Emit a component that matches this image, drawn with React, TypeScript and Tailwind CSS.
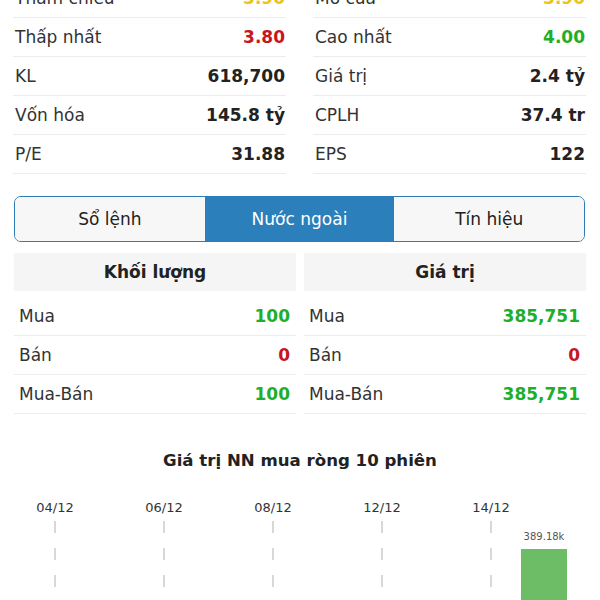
import React from "react";

type Row = { label: string; value: string; color?: string };

const leftTop: Row[] = [
  { label: "Tham chiếu", value: "3.90", color: "text-[#edc21a]" },
  { label: "Thấp nhất", value: "3.80", color: "text-[#c8161d]" },
  { label: "KL", value: "618,700" },
  { label: "Vốn hóa", value: "145.8 tỷ" },
  { label: "P/E", value: "31.88" },
];
const rightTop: Row[] = [
  { label: "Mở cửa", value: "3.90", color: "text-[#edc21a]" },
  { label: "Cao nhất", value: "4.00", color: "text-[#1fae2a]" },
  { label: "Giá trị", value: "2.4 tỷ" },
  { label: "CPLH", value: "37.4 tr" },
  { label: "EPS", value: "122" },
];

const leftNN: Row[] = [
  { label: "Mua", value: "100", color: "text-[#1fae2a]" },
  { label: "Bán", value: "0", color: "text-[#c8161d]" },
  { label: "Mua-Bán", value: "100", color: "text-[#1fae2a]" },
];
const rightNN: Row[] = [
  { label: "Mua", value: "385,751", color: "text-[#1fae2a]" },
  { label: "Bán", value: "0", color: "text-[#c8161d]" },
  { label: "Mua-Bán", value: "385,751", color: "text-[#1fae2a]" },
];

function TopCol({ rows }: { rows: Row[] }) {
  return (
    <div className="flex flex-col">
      {rows.map((r) => (
        <div
          key={r.label}
          className="h-[39px] border-b border-[#ececec] flex items-center justify-between pl-[2px] pr-[1px]"
        >
          <span className="text-[#333]">{r.label}</span>
          <span className={`font-bold ${r.color ?? "text-[#222]"}`}>{r.value}</span>
        </div>
      ))}
    </div>
  );
}

function NNCol({ title, rows }: { title: string; rows: Row[] }) {
  return (
    <div className="flex flex-col">
      <div className="h-[38px] bg-[#f5f5f5] flex items-center justify-center font-bold text-[#222]">
        {title}
      </div>
      <div className="mt-[6px] flex flex-col">
        {rows.map((r) => (
          <div
            key={r.label}
            className="h-[39px] border-b border-[#ededed] flex items-center justify-between pl-[5px] pr-[6px]"
          >
            <span className="text-[#333]">{r.label}</span>
            <span className={`font-bold ${r.color ?? "text-[#222]"}`}>{r.value}</span>
          </div>
        ))}
      </div>
    </div>
  );
}

const dates = ["04/12", "06/12", "08/12", "12/12", "14/12"];

export default function App() {
  return (
    <div
      className="w-[600px] h-[600px] overflow-hidden bg-white text-[17px] leading-[24px]"
      style={{ fontFamily: '"DejaVu Sans", sans-serif' }}
    >
      <div className="mt-[-21px] pl-[13px] pr-[14px] grid grid-cols-2 gap-x-[27px]">
        <TopCol rows={leftTop} />
        <TopCol rows={rightTop} />
      </div>

      <div className="mt-[22px] ml-[14px] mr-[15px] h-[46px] border border-[#2c7cb7] rounded-[7px] overflow-hidden grid grid-cols-3">
        <div className="bg-[#f7f7f7] flex items-center justify-center text-[#222]">Sổ lệnh</div>
        <div className="bg-[#2b7fba] flex items-center justify-center text-white">Nước ngoài</div>
        <div className="bg-[#f7f7f7] flex items-center justify-center text-[#222]">Tín hiệu</div>
      </div>

      <div className="mt-[11px] px-[14px] grid grid-cols-2 gap-x-[8px]">
        <NNCol title="Khối lượng" rows={leftNN} />
        <NNCol title="Giá trị" rows={rightNN} />
      </div>

      <div className="mt-[35px] text-center font-bold text-[#222] text-[16.6px] leading-[24px]">
        Giá trị NN mua ròng 10 phiên
      </div>

      <svg width="600" height="127" className="block">
        {dates.map((d, i) => {
          const x = 55 + i * 109;
          return (
            <g key={d}>
              <text
                x={x}
                y={35}
                textAnchor="middle"
                dominantBaseline="middle"
                fontSize="13"
                fill="#333"
                fontFamily='"DejaVu Sans", sans-serif'
              >
                {d}
              </text>
              <line
                x1={x}
                x2={x}
                y1={48}
                y2={127}
                stroke="#c4c4c4"
                strokeWidth="1.3"
                strokeDasharray="12 15"
              />
            </g>
          );
        })}
        <text
          x={544}
          y={64}
          textAnchor="middle"
          dominantBaseline="middle"
          fontSize="10"
          fill="#555"
          fontFamily='"DejaVu Sans", sans-serif'
        >
          389.18k
        </text>
        <rect x={521} y={76} width={46} height={60} fill="#6cbd66" />
      </svg>
    </div>
  );
}
